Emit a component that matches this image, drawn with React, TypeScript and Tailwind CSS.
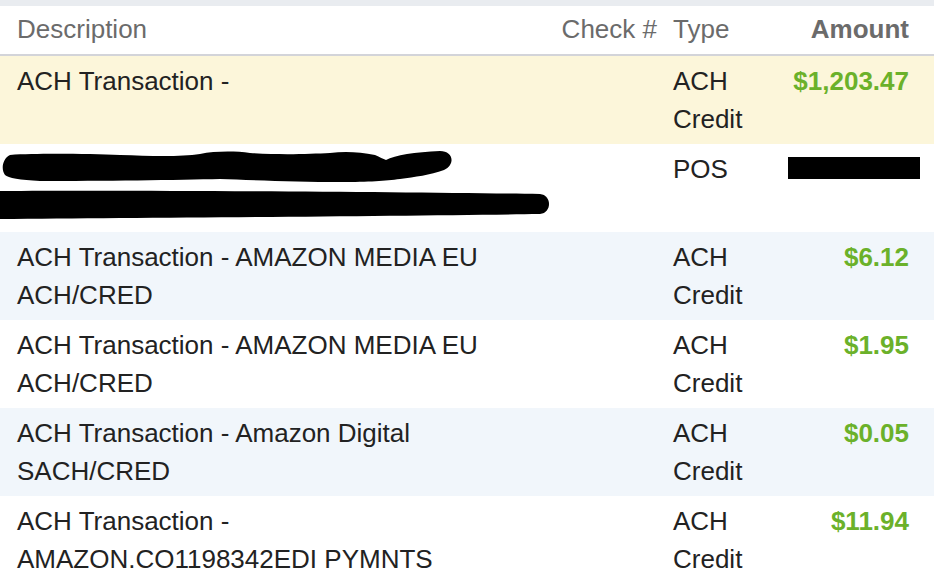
import React from "react";

type Row = {
  lines: string[];
  check?: string;
  type: string[];
  amount?: string;
  bg: string;
  redacted?: boolean;
};

const rows: Row[] = [
  { lines: ["ACH Transaction -"], type: ["ACH", "Credit"], amount: "$1,203.47", bg: "bg-[#fcf6da]" },
  { lines: [], type: ["POS"], bg: "bg-white", redacted: true },
  { lines: ["ACH Transaction - AMAZON MEDIA EU", "ACH/CRED"], type: ["ACH", "Credit"], amount: "$6.12", bg: "bg-[#f1f6fb]" },
  { lines: ["ACH Transaction - AMAZON MEDIA EU", "ACH/CRED"], type: ["ACH", "Credit"], amount: "$1.95", bg: "bg-white" },
  { lines: ["ACH Transaction - Amazon Digital", "SACH/CRED"], type: ["ACH", "Credit"], amount: "$0.05", bg: "bg-[#f1f6fb]" },
  { lines: ["ACH Transaction -", "AMAZON.CO1198342EDI PYMNTS"], type: ["ACH", "Credit"], amount: "$11.94", bg: "bg-white" },
];

// scribbled-out description, drawn over the row
const Redaction = () => (
  <svg className="absolute left-0 top-0" width="934" height="88" viewBox="0 0 934 88">
    <path
      d="M10 11 C40 9 90 10 120 11 C150 12 180 13 200 10 C215 7 235 7 250 9 C280 11 310 10 330 9 C345 7 360 8 375 11 C380 13 383 15 386 16 C395 11 415 8 440 7 C453 7 456 20 444 26 C430 31 415 33 400 35 C385 37 370 38 340 38 C300 38 250 36 220 35 C180 36 100 37 40 37 C20 36 8 34 5 31 C1 26 2 15 10 11 Z"
      fill="#000"
    />
    <path
      d="M0 47 C150 46 400 48 540 50 C552 51 552 69 540 70 C400 72 150 74 0 75 Z"
      fill="#000"
    />
    <rect x="788" y="13" width="132" height="22" fill="#000" />
  </svg>
);

export default function App() {
  return (
    <div className="w-[934px] h-[582px] overflow-hidden bg-white font-['Liberation_Sans',Arial,sans-serif] text-[26px] leading-[38px] text-[#222]">
      <div className="h-[6px] bg-[#e9ecf0]" />

      {/* Header */}
      <div className="flex h-[50px] pt-[4px] border-b-2 border-[#d3d4d9] text-[#6b6b6b]">
        <div className="w-[540px] pl-[17px]">Description</div>
        <div className="w-[117px] text-right">Check #</div>
        <div className="w-[130px] pl-[16px]">Type</div>
        <div className="w-[122px] text-right font-bold">Amount</div>
      </div>

      {rows.map((row, i) => (
        <div key={i} className={`relative flex h-[88px] pt-[6px] ${row.bg}`}>
          <div className="w-[540px] pl-[17px]">
            {row.lines.map((l) => (
              <div key={l}>{l}</div>
            ))}
          </div>
          <div className="w-[117px] text-right">{row.check}</div>
          <div className="w-[130px] pl-[16px]">
            {row.type.map((t) => (
              <div key={t}>{t}</div>
            ))}
          </div>
          <div className="w-[122px] text-right font-bold text-[#6bb12a]">{row.amount}</div>
          {row.redacted && <Redaction />}
        </div>
      ))}
    </div>
  );
}
